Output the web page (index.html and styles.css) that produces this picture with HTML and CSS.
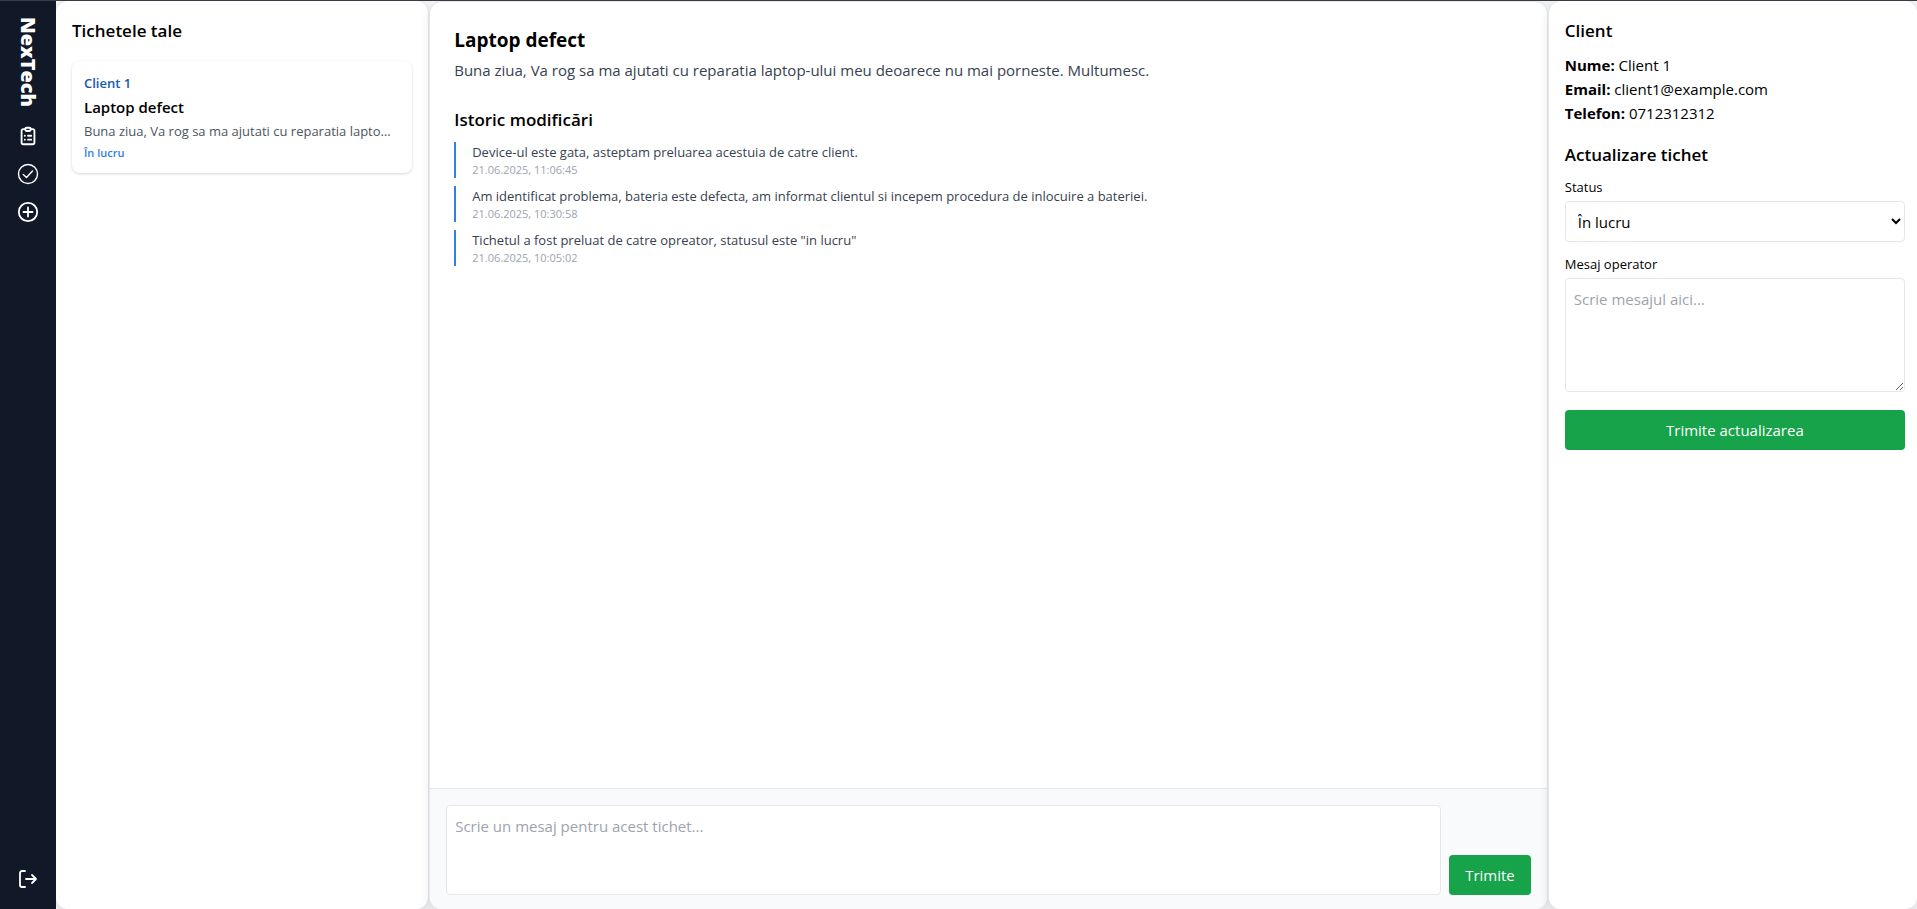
FILE: index.html
```html
<!DOCTYPE html>
<html lang="ro">
<head>
    <meta charset="UTF-8">
    <meta name="viewport" content="width=device-width, initial-scale=1.0">
    <title>NexTech - Tichete</title>
    <link rel="stylesheet" href="styles.css">
</head>
<body>
    <div class="app">
        <nav class="sidebar">
            <div class="brand">NexTech</div>
            <a href="#" class="nav-link" aria-label="Tichete">
                <svg width="22" height="22" viewBox="0 0 24 24" fill="none" stroke="currentColor" stroke-width="2" stroke-linecap="round" stroke-linejoin="round">
                    <path d="M9 4.500H7a2 2 0 0 0-2 2V19a2 2 0 0 0 2 2h10a2 2 0 0 0 2-2V6.500a2 2 0 0 0-2-2h-2"/>
                    <rect x="9" y="3" width="6" height="3.500" rx="1.500"/>
                    <path d="M8.500 11.700h.1M12 11.700h3.500M8.500 16h.1M12 16h3.500"/>
                </svg>
            </a>
            <a href="#" class="nav-link" aria-label="Finalizate">
                <svg width="22" height="22" viewBox="0 0 22 22" fill="none" stroke="currentColor" stroke-width="1.4" stroke-linecap="round" stroke-linejoin="round">
                    <circle cx="11" cy="11" r="9.5"/>
                    <path d="M6.300 11.500l3.200 3 6-6.500"/>
                </svg>
            </a>
            <a href="#" class="nav-link" aria-label="Tichet nou">
                <svg width="22" height="22" viewBox="0 0 22 22" fill="none" stroke="currentColor" stroke-width="1.8" stroke-linecap="round">
                    <circle cx="11" cy="11" r="9.2"/>
                    <path d="M11 6.500v9M6.500 11h9"/>
                </svg>
            </a>
            <a href="#" class="nav-link logout" aria-label="Deconectare">
                <svg width="20" height="20" viewBox="0 0 20 20" fill="none" stroke="currentColor" stroke-width="1.8" stroke-linecap="round" stroke-linejoin="round">
                    <path d="M7 2H4a2 2 0 0 0-2 2v12a2 2 0 0 0 2 2h3"/>
                    <path d="M8 10h10M14 6l4 4-4 4"/>
                </svg>
            </a>
        </nav>

        <div class="workspace">
            <aside class="panel tickets">
                <h2>Tichetele tale</h2>
                <a href="#" class="ticket-card">
                    <span class="ticket-client">Client 1</span>
                    <span class="ticket-name">Laptop defect</span>
                    <span class="ticket-text">Buna ziua, Va rog sa ma ajutati cu reparatia laptop-ului meu deoarece nu mai porneste. Multumesc.</span>
                    <span class="ticket-status">În lucru</span>
                </a>
            </aside>

            <main class="panel detail">
                <div class="detail-body">
                    <h1>Laptop defect</h1>
                    <p class="detail-text">Buna ziua, Va rog sa ma ajutati cu reparatia laptop-ului meu deoarece nu mai porneste. Multumesc.</p>
                    <h2>Istoric modificări</h2>
                    <ul class="history">
                        <li>
                            <p>Device-ul este gata, asteptam preluarea acestuia de catre client.</p>
                            <time>21.06.2025, 11:06:45</time>
                        </li>
                        <li>
                            <p>Am identificat problema, bateria este defecta, am informat clientul si incepem procedura de inlocuire a bateriei.</p>
                            <time>21.06.2025, 10:30:58</time>
                        </li>
                        <li>
                            <p>Tichetul a fost preluat de catre opreator, statusul este "in lucru"</p>
                            <time>21.06.2025, 10:05:02</time>
                        </li>
                    </ul>
                </div>
                <form class="reply">
                    <textarea class="field reply-text" aria-label="Mesaj" placeholder="Scrie un mesaj pentru acest tichet..."></textarea>
                    <button type="button" class="btn">Trimite</button>
                </form>
            </main>

            <aside class="panel client">
                <h2>Client</h2>
                <div class="client-info">
                    <p><strong>Nume:</strong> Client 1</p>
                    <p><strong>Email:</strong> client1@example.com</p>
                    <p><strong>Telefon:</strong> 0712312312</p>
                </div>
                <h2>Actualizare tichet</h2>
                <form class="update">
                    <label for="status">Status</label>
                    <select id="status" class="field status">
                        <option>În lucru</option>
                        <option>Finalizat</option>
                    </select>
                    <label for="message">Mesaj operator</label>
                    <textarea id="message" class="field message" placeholder="Scrie mesajul aici..."></textarea>
                    <button type="button" class="btn btn-wide">Trimite actualizarea</button>
                </form>
            </aside>
        </div>
    </div>
</body>
</html>
```
FILE: styles.css
```css
* {
    box-sizing: border-box;
    margin: 0;
    padding: 0;
}
body {
    font-family: "Segoe UI", "Open Sans", "Noto Sans", sans-serif;
    font-size: 15px;
    line-height: 24px;
    color: #000;
    background-color: #f3f4f6;
}
h1 {
    font-size: 19px;
    line-height: 28px;
    font-weight: 700;
}
h2 {
    font-size: 17px;
    line-height: 28px;
    font-weight: 600;
}
a {
    color: inherit;
    text-decoration: none;
}
.app {
    display: flex;
    height: 100vh;
    border-top: 1px solid #3b3b46;
}

/* sidebar */
.sidebar {
    width: 56px;
    display: flex;
    flex-direction: column;
    align-items: center;
    gap: 16px;
    padding: 16px 0 20px;
    background-color: #111827;
    color: #fff;
}
.brand {
    writing-mode: vertical-rl;
    margin-bottom: 2px;
    font-size: 20px;
    line-height: 28px;
    font-weight: 800;
}
.nav-link {
    display: flex;
}
.logout {
    margin-top: auto;
}

.workspace {
    flex: 1;
    min-width: 0;
    display: grid;
    grid-template-columns: 20% 60% 1fr;
    gap: 2px;
    overflow: hidden;
}
.panel {
    min-width: 0;
    background-color: #fff;
    border-radius: 12px;
    box-shadow: 0 0 0 1px #e5e7eb, 0 4px 12px rgba(0, 0, 0, 0.1);
}

/* ticket list */
.tickets {
    padding: 16px;
}
.ticket-card {
    display: flex;
    flex-direction: column;
    gap: 4px;
    margin-top: 16px;
    padding: 12px 16px 12px 12px;
    line-height: 20px;
    border-radius: 8px;
    box-shadow: 0 1px 3px rgba(0, 0, 0, 0.16);
}
.ticket-client {
    font-size: 13px;
    font-weight: 600;
    color: #1656b0;
}
.ticket-name {
    font-weight: 600;
}
.ticket-text {
    font-size: 13px;
    color: #4b5563;
    overflow: hidden;
    text-overflow: ellipsis;
    white-space: nowrap;
}
.ticket-status {
    font-size: 11px;
    line-height: 16px;
    font-weight: 600;
    color: #3182e0;
}

/* ticket detail */
.detail {
    display: flex;
    flex-direction: column;
    margin-top: 1px;
    overflow: hidden;
}
.detail-body {
    flex: 1;
    padding: 24px;
}
.detail-text {
    margin: 4px 0 24px;
    color: #374151;
}
.history {
    display: flex;
    flex-direction: column;
    gap: 8px;
    margin-top: 8px;
    list-style: none;
}
.history li {
    padding-left: 16px;
    border-left: 2px solid #3182e0;
}
.history p {
    font-size: 13px;
    line-height: 20px;
    color: #374151;
}
.history time {
    display: block;
    font-size: 11px;
    line-height: 16px;
    color: #9ca3af;
}
.reply {
    display: flex;
    align-items: flex-end;
    gap: 8px;
    padding: 16px 16px 14px;
    background-color: #f9fafb;
    border-top: 1px solid #e5e7eb;
}

/* form controls */
.field {
    display: block;
    width: 100%;
    padding: 8px;
    font: inherit;
    color: inherit;
    background-color: #fff;
    border: 1px solid #e5e7eb;
    border-radius: 4px;
}
.field::placeholder {
    color: #9ca3af;
}
.reply-text {
    flex: 1;
    height: 90px;
    resize: none;
}
.btn {
    padding: 8px 16px;
    font: inherit;
    color: #fff;
    background-color: #16a34a;
    border: none;
    border-radius: 4px;
    cursor: pointer;
}
.btn-wide {
    width: 100%;
}

/* client info and update form */
.client {
    padding: 16px 12px 16px 16px;
}
.client-info {
    margin: 8px 0 16px;
}
.update {
    margin-top: 8px;
}
.update label {
    display: block;
    margin-bottom: 4px;
    font-size: 13px;
    line-height: 20px;
}
.status {
    height: 41px;
    margin-bottom: 12px;
    padding: 0 0 0 8px;
}
.message {
    height: 114px;
    margin-bottom: 18px;
}
```
